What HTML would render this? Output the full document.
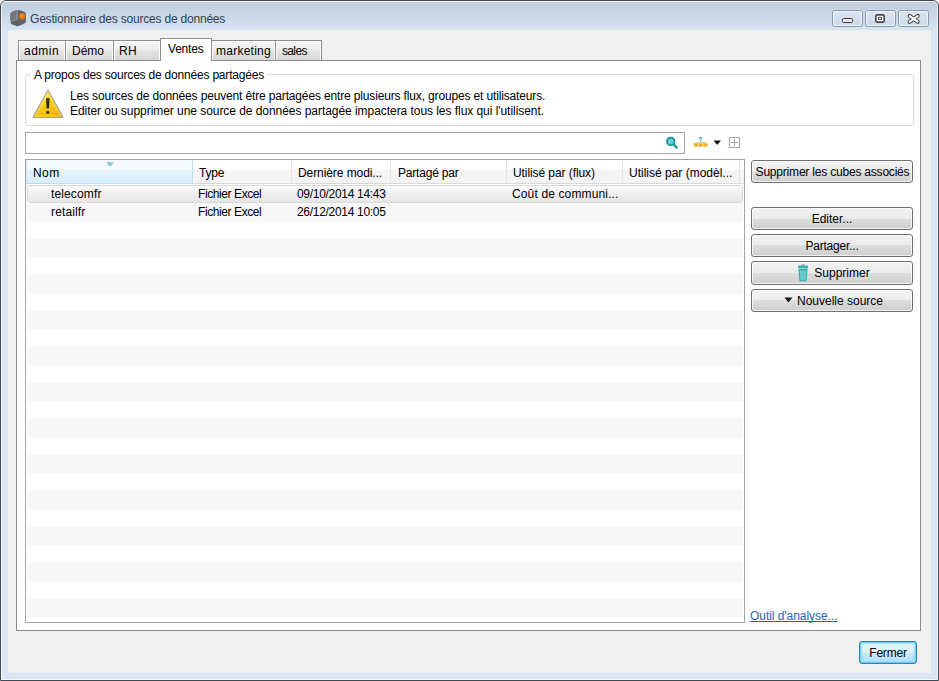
<!DOCTYPE html>
<html><head><meta charset="utf-8">
<style>
*{margin:0;padding:0;box-sizing:border-box}
html,body{width:939px;height:681px;overflow:hidden;background:#fff}
body{font-family:"Liberation Sans",sans-serif;font-size:12px;letter-spacing:-0.2px;color:#000;position:relative}
.a{position:absolute}
.t{position:absolute;white-space:nowrap;line-height:13px}
#win{left:0;top:0;width:939px;height:681px;border:1px solid #434852;border-radius:6px 6px 0 0;
 background:linear-gradient(#c1cfde 0px,#c3d2e1 6px,#cbd9e7 16px,#d3e2f0 26px,#d8e5f2 30px,#d8e5f2 681px)}
#hl{left:1px;top:1px;width:937px;height:679px;border:1px solid rgba(255,255,255,.75);border-radius:5px 5px 0 0}
#content{left:8px;top:30px;width:923px;height:643px;background:#f0f0f0}
.tb{top:10px;width:31px;height:17px;border:1px solid #8d9bad;border-radius:2.5px;
 background:linear-gradient(#dbe5f1,#ccd9ea);box-shadow:inset 0 0 0 1px rgba(255,255,255,.55)}
.tab{top:40px;height:21px;border:1px solid #8d8d8d;background:linear-gradient(#f4f4f4 0,#efefef 40%,#e2e2e2 60%,#d6d6d6 100%);
 box-shadow:inset 1px 1px 0 #fff,inset -1px 0 0 #fff}
.tab span{position:absolute;top:4px;line-height:13px}
#panel{left:16px;top:60px;width:905px;height:571px;border:1px solid #8b8b8b;background:#fff}
#grp{left:25px;top:74px;width:889px;height:52px;border:1px solid #d6dce2;border-radius:3px}
.btn{border:1px solid #707070;border-radius:3px;background:linear-gradient(#f2f2f2 0,#ebebeb 50%,#dddddd 50%,#cfcfcf 100%);
 box-shadow:inset 0 0 0 1px rgba(255,255,255,.7)}
.btn span{position:absolute;left:0;right:0;text-align:center;line-height:13px}
.hsep{top:160px;width:1px;height:23px;background:#e3e5e9}
.stripe{left:27px;width:716px;height:18px;background:#f7f7f7}
</style></head><body>
<div id="win" class="a"></div>
<div id="hl" class="a"></div>

<!-- title bar icon -->
<svg class="a" style="left:8px;top:8px" width="20" height="20" viewBox="0 0 20 20">
 <path d="M3.2 4.6 Q4 3.6 6 3 L9.5 2 Q11 1.8 12.5 2.4 L16.2 3.8 Q17.8 4.6 18 6.5 L17.8 13.5 Q17.6 14.8 16.4 15.6 L11.5 17.8 Q10 18.4 8.4 17.9 L4.2 16.4 Q2.8 15.8 2.6 14.4 L2.4 7 Q2.5 5.5 3.2 4.6 Z" fill="#606266"/>
 <path d="M3.2 4.6 Q4 3.6 6 3 L9.5 2 L9.6 11.2 L2.6 13 L2.4 7 Q2.5 5.5 3.2 4.6 Z" fill="#74777c"/>
 <path d="M9.2 2.2 L9.4 11.3 L2.8 13.3" stroke="#9a9ea4" stroke-width="0.9" fill="none"/>
 <circle cx="14.2" cy="8.2" r="3.3" fill="#e9791e" stroke="#9a5a2a" stroke-width="0.6"/>
 <circle cx="13.6" cy="7.6" r="1.8" fill="#f28a2a"/>
</svg>
<div class="t" style="left:30px;top:13px;color:#2e3f55">Gestionnaire des sources de données</div>

<div class="a tb" style="left:832px"></div>
<div class="a tb" style="left:865px"></div>
<div class="a tb" style="left:898px"></div>
<div class="a" style="left:842px;top:18px;width:11px;height:5px;border:1px solid #3a3f47;border-radius:1.5px;background:#e8e8e0"></div>
<svg class="a" style="left:875px;top:14px" width="10" height="9" viewBox="0 0 10 9">
 <rect x="0.85" y="0.9" width="8.3" height="7.2" rx="1.4" fill="#fff" stroke="#444a54" stroke-width="1.7"/>
 <rect x="3.5" y="3.5" width="3" height="2" fill="#fff" stroke="#555b64" stroke-width="1"/>
</svg>

<svg class="a" style="left:906px;top:12px" width="15" height="13" viewBox="0 0 15 13">
 <path d="M3.6 3.9 L11.8 9.9 M11.8 3.9 L3.6 9.9" stroke="#3e444e" stroke-width="3.9" stroke-linecap="round" stroke-linejoin="round"/>
 <path d="M3.8 4.1 L11.6 9.7 M11.6 4.1 L3.8 9.7" stroke="#fbfbfb" stroke-width="2.1" stroke-linecap="round"/>
</svg>

<div id="content" class="a"></div>

<!-- tabs -->
<div id="panel" class="a"></div>
<div class="a tab" style="left:18px;width:48px"><span style="left:5px;letter-spacing:0.5px">admin</span></div>
<div class="a tab" style="left:65px;width:49px"><span style="left:6px;letter-spacing:0">Démo</span></div>
<div class="a tab" style="left:113px;width:48px"><span style="left:5px;letter-spacing:0.3px">RH</span></div>
<div class="a tab" style="left:211px;width:65px"><span style="left:4px;letter-spacing:0.25px">marketing</span></div>
<div class="a tab" style="left:275px;width:47px"><span style="left:6px;letter-spacing:-0.65px">sales</span></div>
<div class="a" style="left:160px;top:38px;width:52px;height:23px;border:1px solid #8d8d8d;border-bottom:none;background:#fff"><span class="t" style="left:7px;top:4px">Ventes</span></div>

<!-- group box -->
<div id="grp" class="a"></div>
<div class="t" style="left:31px;top:69px;background:#fff;padding:0 3px">A propos des sources de données partagées</div>
<svg class="a" style="left:32px;top:89px" width="32" height="30" viewBox="0 0 32 30">
 <defs><linearGradient id="yg" x1="0.3" y1="0" x2="0.7" y2="1"><stop offset="0" stop-color="#ffe870"/><stop offset=".45" stop-color="#f9d21a"/><stop offset="1" stop-color="#eeae0a"/></linearGradient></defs>
 <path d="M16 1.2 L30.6 27.4 Q31.1 28.5 29.9 28.5 L2.1 28.5 Q0.9 28.5 1.4 27.4 Z" fill="url(#yg)" stroke="#b0a58a" stroke-width="1.2" stroke-linejoin="round"/>
 <path d="M16 4 L28.6 26.8 L3.4 26.8 Z" fill="none" stroke="#fff6c0" stroke-opacity=".55" stroke-width=".8" stroke-linejoin="round"/>
 <path d="M14 9.3 L17.6 9.3 L17 19.6 L14.6 19.6 Z" fill="#2a2a2a"/>
 <circle cx="15.8" cy="23.2" r="1.5" fill="#2a2a2a"/>
</svg>
<div class="t" style="left:70px;top:90px;letter-spacing:-0.15px">Les sources de données peuvent être partagées entre plusieurs flux, groupes et utilisateurs.</div>
<div class="t" style="left:70px;top:105px;letter-spacing:-0.05px">Editer ou supprimer une source de données partagée impactera tous les flux qui l'utilisent.</div>

<!-- search -->
<div class="a" style="left:25px;top:132px;width:660px;height:22px;border:1px solid #a6a6a6;background:#fff"></div>
<svg class="a" style="left:664px;top:135px" width="16" height="16" viewBox="0 0 16 16">
 <circle cx="6.7" cy="6.4" r="3.8" fill="#62cfe0" stroke="#17938f" stroke-width="1.7"/>
 <path d="M9.6 9.4 L12.8 12.6" stroke="#17938f" stroke-width="2.2" stroke-linecap="round"/>
</svg>
<svg class="a" style="left:692px;top:136px" width="18" height="12" viewBox="0 0 18 12">
 <path d="M6.6 1 L10.6 1 L9.8 3.6 L7.4 3.6 Z" fill="#6cc6d4"/>
 <rect x="8.1" y="3.6" width="1" height="2.4" fill="#88b9c0"/>
 <rect x="3.5" y="5.9" width="10.5" height="1" fill="#d9c89a"/>
 <rect x="1.8" y="7" width="4.1" height="3.7" fill="#eeb02a"/>
 <rect x="6.6" y="7" width="4.1" height="3.7" fill="#eeb02a"/>
 <rect x="11.4" y="7" width="4.1" height="3.7" fill="#eeb02a"/>
 <rect x="1.8" y="7" width="13.7" height="1" fill="#f6cf6a" opacity=".7"/>
</svg>
<svg class="a" style="left:713px;top:140px" width="9" height="6" viewBox="0 0 9 6"><path d="M0.5 0.5 L8 0.5 L4.25 5 Z" fill="#111"/></svg>
<div class="a" style="left:729px;top:137px;width:11px;height:11px;border:1px solid #a6a6a6;background:#fff"></div>
<div class="a" style="left:734px;top:139px;width:1px;height:7px;background:#9e9e9e"></div>
<div class="a" style="left:731px;top:142px;width:7px;height:1px;background:#9e9e9e"></div>

<!-- table -->
<div class="a" style="left:25px;top:159px;width:720px;height:464px;border:1px solid #a3a3a3;background:#fff;overflow:hidden">
</div>
<div class="a" style="left:26px;top:160px;width:718px;height:23px;background:linear-gradient(#ffffff 0,#ffffff 10px,#f4f4f5 10px,#f3f3f4 23px)"></div>
<div class="a" style="left:26px;top:183px;width:718px;height:1px;background:#d8d9db"></div>
<div class="a" style="left:26px;top:160px;width:167px;height:24px;background:linear-gradient(#f5fafd 0,#f2f9fd 10px,#e3f2fb 10px,#d8eef9 23px);border-bottom:1px solid #b7dbf0;border-right:1px solid #bfe0f3;border-left:1px solid #d0e8f6"></div>
<svg class="a" style="left:107px;top:162px" width="8" height="5" viewBox="0 0 8 5"><path d="M0 0 L7.4 0 L3.7 4.2 Z" fill="#93d3e2"/><path d="M0.4 0.3 L3.7 4" stroke="#4f8fa0" stroke-width="1"/></svg>
<div class="a hsep" style="left:291px"></div>
<div class="a hsep" style="left:390px"></div>
<div class="a hsep" style="left:506px"></div>
<div class="a hsep" style="left:622px"></div>
<div class="a hsep" style="left:739px"></div>
<div class="t" style="left:33px;top:167px;letter-spacing:0.4px">Nom</div>
<div class="t" style="left:199px;top:167px">Type</div>
<div class="t" style="left:298px;top:167px;letter-spacing:-0.08px">Dernière modi...</div>
<div class="t" style="left:398px;top:167px">Partagé par</div>
<div class="t" style="left:513px;top:167px;letter-spacing:-0.08px">Utilisé par (flux)</div>
<div class="t" style="left:629px;top:167px;letter-spacing:0px">Utilisé par (modèl...</div>

<div id="stripes"></div>
<div class="a stripe" style="top:203px"></div>
<div class="a stripe" style="top:239px"></div>
<div class="a stripe" style="top:275px"></div>
<div class="a stripe" style="top:311px"></div>
<div class="a stripe" style="top:347px"></div>
<div class="a stripe" style="top:383px"></div>
<div class="a stripe" style="top:419px"></div>
<div class="a stripe" style="top:455px"></div>
<div class="a stripe" style="top:491px"></div>
<div class="a stripe" style="top:527px"></div>
<div class="a stripe" style="top:563px"></div>
<div class="a stripe" style="top:599px"></div>

<div class="a" style="left:27px;top:185px;width:716px;height:18px;border:1px solid #d9d9d9;border-radius:3px;background:linear-gradient(#fafafa,#e6e6e6)"></div>
<div class="t" style="left:51px;top:188px;letter-spacing:0.13px">telecomfr</div>
<div class="t" style="left:198px;top:188px;letter-spacing:-0.41px">Fichier Excel</div>
<div class="t" style="left:297px;top:188px;letter-spacing:-0.3px">09/10/2014 14:43</div>
<div class="t" style="left:512px;top:188px;letter-spacing:0.14px">Coût de communi...</div>
<div class="t" style="left:51px;top:206px;letter-spacing:0.14px">retailfr</div>
<div class="t" style="left:198px;top:206px;letter-spacing:-0.41px">Fichier Excel</div>
<div class="t" style="left:297px;top:206px;letter-spacing:-0.3px">26/12/2014 10:05</div>

<!-- buttons -->
<div class="a btn" style="left:751px;top:160px;width:162px;height:23px"><span style="top:5px;left:1px">Supprimer les cubes associés</span></div>
<div class="a btn" style="left:751px;top:207px;width:162px;height:23px"><span style="top:5px;letter-spacing:0">Editer...</span></div>
<div class="a btn" style="left:751px;top:234px;width:162px;height:23px"><span style="top:5px">Partager...</span></div>
<div class="a btn" style="left:751px;top:261px;width:162px;height:24px"><span style="top:5px;left:20px;letter-spacing:0">Supprimer</span></div>
<div class="a btn" style="left:751px;top:289px;width:162px;height:23px"><span style="top:5px;left:16px;letter-spacing:0">Nouvelle source</span></div>
<svg class="a" style="left:797px;top:264px" width="12" height="18" viewBox="0 0 12 18">
 <path d="M4 1.8 Q4 0.6 5.2 0.6 L6.8 0.6 Q8 0.6 8 1.8 Z" fill="#3aaeb0"/>
 <path d="M1 2.4 Q1 1.6 2 1.6 L10 1.6 Q11 1.6 11 2.4 L11 4.4 L1 4.4 Z" fill="#3ab4b6"/>
 <path d="M1.4 5 L10.6 5 L9.7 16.6 Q9.6 17.2 9 17.2 L3 17.2 Q2.4 17.2 2.3 16.6 Z" fill="#34b0b2"/>
 <path d="M3.8 6.3 L4.2 15.8 M6 6.3 L6 15.8 M8.2 6.3 L7.8 15.8" stroke="#9fe0e0" stroke-width="1"/>
</svg>
<svg class="a" style="left:784px;top:297px" width="9" height="6" viewBox="0 0 9 6"><path d="M0.5 0.5 L8.5 0.5 L4.5 5.5 Z" fill="#111"/></svg>

<div class="t" style="left:750px;top:610px;color:#1f66b6;text-decoration:underline;text-decoration-skip-ink:none;letter-spacing:-0.05px">Outil d'analyse...</div>

<div class="a" style="left:859px;top:641px;width:58px;height:23px;border:1px solid #3c7fb1;border-radius:3px;background:linear-gradient(#e9f6fd 0,#dcf1fc 45%,#c9e9fa 55%,#b4dff6 100%);box-shadow:inset 0 0 0 1px #5ccdf6,inset 0 0 2px 2px rgba(120,215,250,.5)"><span class="t" style="left:0;right:0;top:5px;text-align:center">Fermer</span></div>
</body></html>
